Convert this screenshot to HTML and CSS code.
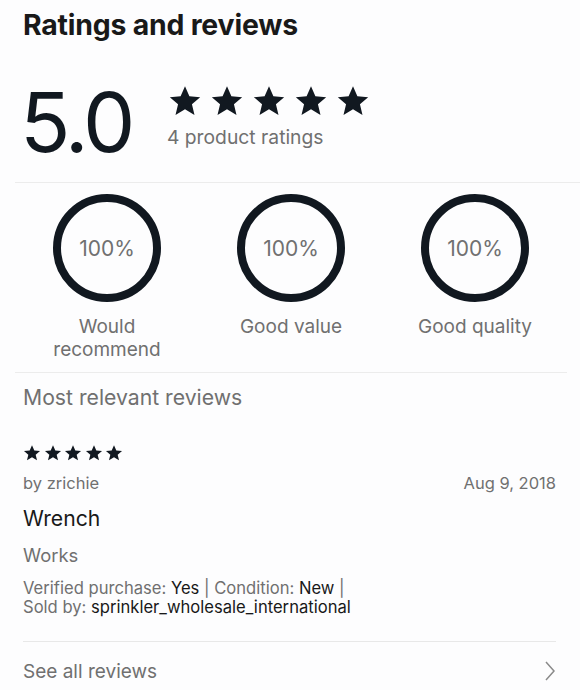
FILE: index.html
```html
<!DOCTYPE html>
<html lang="en">
<head>
    <meta charset="UTF-8">
    <meta name="viewport" content="width=device-width, initial-scale=1.0">
    <title>Ratings and reviews</title>
    <link rel="stylesheet" href="styles.css">
</head>
<body>
    <div class="page">
        <h1 class="title">Ratings and reviews</h1>

        <div class="summary">
            <div class="score">5.0</div>
            <div class="score-info">
                <div class="stars stars-lg">
                    <svg viewBox="0 0 24 24"><path d="M12 1.5l3.1 7.1 7.6.7-5.8 5 1.8 7.5L12 17.8l-6.7 4 1.8-7.5-5.8-5 7.6-.7z"/></svg>
                    <svg viewBox="0 0 24 24"><path d="M12 1.5l3.1 7.1 7.6.7-5.8 5 1.8 7.5L12 17.8l-6.7 4 1.8-7.5-5.8-5 7.6-.7z"/></svg>
                    <svg viewBox="0 0 24 24"><path d="M12 1.5l3.1 7.1 7.6.7-5.8 5 1.8 7.5L12 17.8l-6.7 4 1.8-7.5-5.8-5 7.6-.7z"/></svg>
                    <svg viewBox="0 0 24 24"><path d="M12 1.5l3.1 7.1 7.6.7-5.8 5 1.8 7.5L12 17.8l-6.7 4 1.8-7.5-5.8-5 7.6-.7z"/></svg>
                    <svg viewBox="0 0 24 24"><path d="M12 1.5l3.1 7.1 7.6.7-5.8 5 1.8 7.5L12 17.8l-6.7 4 1.8-7.5-5.8-5 7.6-.7z"/></svg>
                </div>
                <div class="count">4 product ratings</div>
            </div>
        </div>

        <div class="aspects">
            <div class="aspect">
                <div class="ring">100%</div>
                <div class="aspect-label">Would<br>recommend</div>
            </div>
            <div class="aspect">
                <div class="ring">100%</div>
                <div class="aspect-label">Good value</div>
            </div>
            <div class="aspect">
                <div class="ring">100%</div>
                <div class="aspect-label">Good quality</div>
            </div>
        </div>

        <div class="reviews">
            <h2 class="reviews-title">Most relevant reviews</h2>

            <div class="review">
                <div class="stars stars-sm">
                    <svg viewBox="0 0 24 24"><path d="M12 1.5l3.1 7.1 7.6.7-5.8 5 1.8 7.5L12 17.8l-6.7 4 1.8-7.5-5.8-5 7.6-.7z"/></svg>
                    <svg viewBox="0 0 24 24"><path d="M12 1.5l3.1 7.1 7.6.7-5.8 5 1.8 7.5L12 17.8l-6.7 4 1.8-7.5-5.8-5 7.6-.7z"/></svg>
                    <svg viewBox="0 0 24 24"><path d="M12 1.5l3.1 7.1 7.6.7-5.8 5 1.8 7.5L12 17.8l-6.7 4 1.8-7.5-5.8-5 7.6-.7z"/></svg>
                    <svg viewBox="0 0 24 24"><path d="M12 1.5l3.1 7.1 7.6.7-5.8 5 1.8 7.5L12 17.8l-6.7 4 1.8-7.5-5.8-5 7.6-.7z"/></svg>
                    <svg viewBox="0 0 24 24"><path d="M12 1.5l3.1 7.1 7.6.7-5.8 5 1.8 7.5L12 17.8l-6.7 4 1.8-7.5-5.8-5 7.6-.7z"/></svg>
                </div>
                <div class="review-meta">
                    <span>by zrichie</span>
                    <span>Aug 9, 2018</span>
                </div>
                <div class="review-title">Wrench</div>
                <div class="review-body">Works</div>
                <div class="review-details">
                    Verified purchase: <span class="value">Yes</span> | Condition: <span class="value">New</span> |<br>
                    Sold by: <span class="value">sprinkler_wholesale_international</span>
                </div>
            </div>

            <a class="see-all" href="#">
                <span>See all reviews</span>
                <svg class="chevron" viewBox="0 0 12 22"><polyline points="2,2 10,11 2,20"/></svg>
            </a>
        </div>
    </div>
</body>
</html>
```

FILE: styles.css
```css
body {
    margin: 0;
    padding: 0;
    background-color: #fdfdfe;
    font-family: Inter, "Liberation Sans", Arial, sans-serif;
    color: #191919;
}
.page {
    padding-left: 15px;
}
.title {
    margin: 0;
    padding: 8px 0 0 8px;
    font-size: 28.4px;
    line-height: 34px;
    font-weight: 700;
    letter-spacing: -0.2px;
}
.summary {
    display: flex;
    align-items: flex-start;
    padding: 40px 0 0 8px;
    height: 100px;
    border-bottom: 1px solid #ececec;
}
.score {
    font-size: 83px;
    line-height: 80px;
    font-weight: 400;
    letter-spacing: -3.5px;
    color: #111820;
    margin-left: -3px;
}
.score-info {
    margin-left: 36px;
    margin-top: 2px;
}
.stars {
    display: flex;
}
.stars svg {
    fill: #111820;
}
.stars-lg {
    gap: 8px;
}
.stars-lg svg {
    width: 34px;
    height: 34px;
}
.count {
    margin-top: 7px;
    margin-left: -1px;
    font-size: 19.3px;
    color: #707070;
}
.aspects {
    display: grid;
    grid-template-columns: repeat(3, 1fr);
    width: 552px;
    padding: 11px 0 11px;
    border-bottom: 1px solid #ececec;
}
.aspect {
    display: flex;
    flex-direction: column;
    align-items: center;
}
.ring {
    width: 92px;
    height: 92px;
    border: 8px solid #111820;
    border-radius: 50%;
    display: flex;
    align-items: center;
    justify-content: center;
    font-size: 21px;
    color: #707070;
}
.aspect-label {
    margin-top: 13px;
    font-size: 19px;
    line-height: 23px;
    color: #707070;
    text-align: center;
}
.reviews {
    padding: 0 24px 0 8px;
}
.reviews-title {
    margin: 0;
    padding-top: 11px;
    font-size: 21.2px;
    line-height: 26px;
    font-weight: 400;
    color: #707070;
}
.review {
    padding-top: 34px;
    padding-bottom: 24px;
    border-bottom: 1px solid #e8e8e8;
}
.stars-sm {
    gap: 2.5px;
}
.stars-sm svg {
    width: 18px;
    height: 18px;
}
.review-meta {
    display: flex;
    justify-content: space-between;
    margin-top: 10px;
    font-size: 16.5px;
    line-height: 22px;
    color: #707070;
}
.review-title {
    margin-top: 11px;
    font-size: 21.2px;
    line-height: 26px;
    color: #191919;
}
.review-body {
    margin-top: 12px;
    font-size: 18.4px;
    line-height: 24px;
    color: #707070;
}
.review-details {
    margin-top: 12px;
    font-size: 16.6px;
    line-height: 19px;
    color: #707070;
}
.value {
    color: #191919;
}
.see-all {
    display: flex;
    justify-content: space-between;
    align-items: center;
    height: 58px;
    text-decoration: none;
    font-size: 19px;
    color: #707070;
}
.chevron {
    width: 12px;
    height: 22px;
    fill: none;
    stroke: #8a8a8a;
    stroke-width: 1.5;
}
```
